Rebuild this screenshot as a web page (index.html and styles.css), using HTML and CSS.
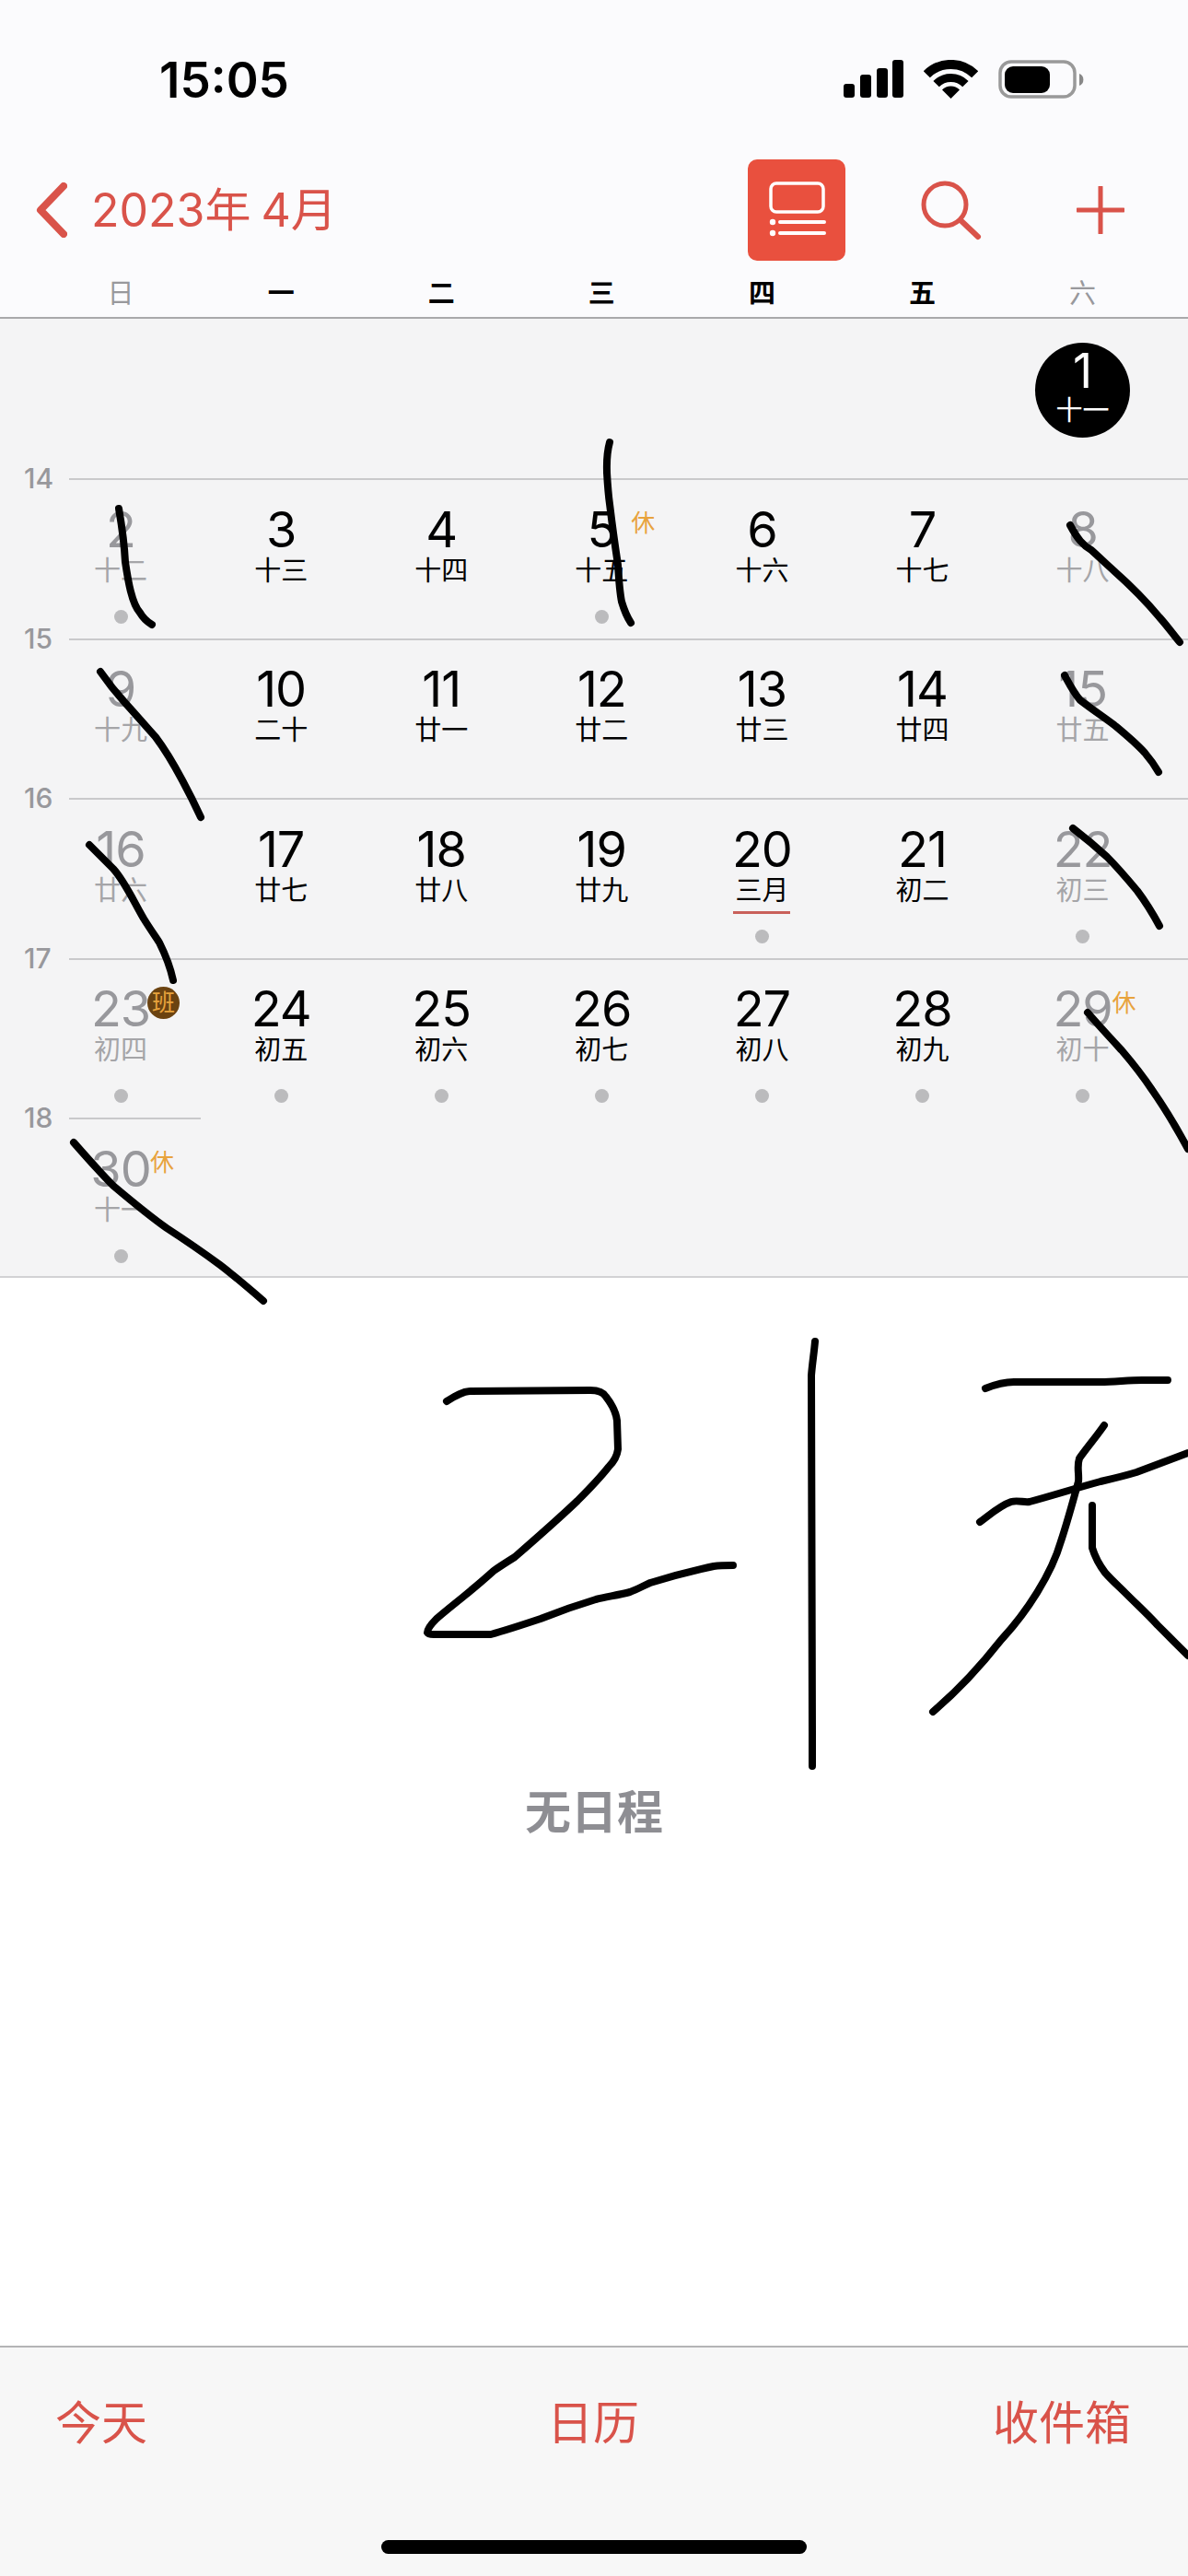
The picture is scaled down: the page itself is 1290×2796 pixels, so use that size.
FILE: index.html
```html
<!DOCTYPE html>
<html>
    <head>
        <meta charset="utf-8">
        <link rel="stylesheet" href="styles.css">
    </head>
    <body>
        <div id="header">
            <div id="status">
                <div id="time">15:05</div>
                <div id="statusIcons">
                    <svg width="65" height="42" viewBox="0 0 65 42"><rect x="0" y="26" width="12" height="15" rx="3"/><rect x="18" y="16" width="12" height="25" rx="3"/><rect x="36" y="9" width="12" height="32" rx="3"/><rect x="53" y="0" width="12" height="41" rx="3"/></svg>
                    <svg width="59" height="42" viewBox="0 0 59 42"><path d="M3.3 15.8A37 37 0 0 1 55.7 15.8" fill="none" stroke="#000" stroke-width="10"/><path d="M13.6 26.1A22.5 22.5 0 0 1 45.4 26.1" fill="none" stroke="#000" stroke-width="9"/><path d="M29.5 42L20 32.5A13.4 13.4 0 0 1 39 32.5Z"/></svg>
                    <svg width="93" height="42" viewBox="0 0 93 42"><rect x="2" y="2" width="81" height="38" rx="12" fill="none" stroke="#999" stroke-width="3.5"/><rect x="7" y="7" width="49" height="29" rx="9"/><path d="M88 15a7 7 0 0 1 0 13Z" fill="#888"/></svg>
                </div>
            </div>
            <div id="nav">
                <svg width="36" height="60" viewBox="0 0 36 60"><path d="M32 4L7 30L32 56" fill="none" stroke="#d9534a" stroke-width="8" stroke-linecap="round" stroke-linejoin="round"/></svg>
                <div id="title">2023年 4月</div>
                <div id="listBtn">
                    <svg width="106" height="110" viewBox="0 0 106 110"><rect x="25" y="26" width="57" height="31" rx="6" fill="none" stroke="#fff" stroke-width="3.5"/><circle cx="27" cy="68" r="3.2" fill="#fff"/><circle cx="27" cy="80" r="3.2" fill="#fff"/><path d="M35 68H83M35 80H83" stroke="#fff" stroke-width="4" stroke-linecap="round"/></svg>
                </div>
                <svg id="searchIcon" width="66" height="66" viewBox="0 0 66 66"><circle cx="26" cy="27" r="23" fill="none" stroke="#d9534a" stroke-width="5"/><path d="M43 44L62 62" stroke="#d9534a" stroke-width="6" stroke-linecap="round"/></svg>
                <svg id="plusIcon" width="52" height="52" viewBox="0 0 52 52"><path d="M26 1V51M1 26H51" stroke="#d9534a" stroke-width="5" stroke-linecap="round"/></svg>
            </div>
            <div id="weekdays">
                <div class="off">日</div>
                <div>一</div>
                <div>二</div>
                <div>三</div>
                <div>四</div>
                <div>五</div>
                <div class="off">六</div>
            </div>
        </div>

        <div id="month">
            <div class="days firstRow">
                <div class="day"></div><div class="day"></div><div class="day"></div><div class="day"></div><div class="day"></div><div class="day"></div>
                <div class="day">
                    <div class="selected"><span class="selNum">1</span><span class="selLunar">十一</span></div>
                </div>
            </div>

            <div class="rule"><span class="weekNum">14</span></div>
            <div class="days">
                <div class="day off"><div class="num">2</div><div class="lunar">十二</div><div class="dot"></div></div>
                <div class="day"><div class="num">3</div><div class="lunar">十三</div></div>
                <div class="day"><div class="num">4</div><div class="lunar">十四</div></div>
                <div class="day"><div class="num">5</div><div class="lunar">十五</div><div class="dot"></div><span class="rest">休</span></div>
                <div class="day"><div class="num">6</div><div class="lunar">十六</div></div>
                <div class="day"><div class="num">7</div><div class="lunar">十七</div></div>
                <div class="day off"><div class="num">8</div><div class="lunar">十八</div></div>
            </div>

            <div class="rule"><span class="weekNum">15</span></div>
            <div class="days">
                <div class="day off"><div class="num">9</div><div class="lunar">十九</div></div>
                <div class="day"><div class="num">10</div><div class="lunar">二十</div></div>
                <div class="day"><div class="num">11</div><div class="lunar">廿一</div></div>
                <div class="day"><div class="num">12</div><div class="lunar">廿二</div></div>
                <div class="day"><div class="num">13</div><div class="lunar">廿三</div></div>
                <div class="day"><div class="num">14</div><div class="lunar">廿四</div></div>
                <div class="day off"><div class="num">15</div><div class="lunar">廿五</div></div>
            </div>

            <div class="rule"><span class="weekNum">16</span></div>
            <div class="days">
                <div class="day off"><div class="num">16</div><div class="lunar">廿六</div></div>
                <div class="day"><div class="num">17</div><div class="lunar">廿七</div></div>
                <div class="day"><div class="num">18</div><div class="lunar">廿八</div></div>
                <div class="day"><div class="num">19</div><div class="lunar">廿九</div></div>
                <div class="day"><div class="num">20</div><div class="lunar monthStart">三月</div><div class="dot"></div></div>
                <div class="day"><div class="num">21</div><div class="lunar">初二</div></div>
                <div class="day off"><div class="num">22</div><div class="lunar">初三</div><div class="dot"></div></div>
            </div>

            <div class="rule"><span class="weekNum">17</span></div>
            <div class="days">
                <div class="day off"><div class="num">23</div><div class="lunar">初四</div><div class="dot"></div><span class="work">班</span></div>
                <div class="day"><div class="num">24</div><div class="lunar">初五</div><div class="dot"></div></div>
                <div class="day"><div class="num">25</div><div class="lunar">初六</div><div class="dot"></div></div>
                <div class="day"><div class="num">26</div><div class="lunar">初七</div><div class="dot"></div></div>
                <div class="day"><div class="num">27</div><div class="lunar">初八</div><div class="dot"></div></div>
                <div class="day"><div class="num">28</div><div class="lunar">初九</div><div class="dot"></div></div>
                <div class="day off"><div class="num">29</div><div class="lunar">初十</div><div class="dot"></div><span class="rest">休</span></div>
            </div>

            <div class="rule short"><span class="weekNum">18</span></div>
            <div class="days">
                <div class="day off"><div class="num">30</div><div class="lunar">十一</div><div class="dot"></div><span class="rest">休</span></div>
            </div>
        </div>

        <div id="agenda">
            <div id="empty">无日程</div>
        </div>

        <div id="footer">
            <div id="tabs">
                <div>今天</div>
                <div>日历</div>
                <div class="tabEnd">收件箱</div>
            </div>
            <div id="homeBar"></div>
        </div>

        <!-- pen marks drawn over the screenshot -->
        <svg id="ink" width="1290" height="2796" viewBox="0 0 1290 2796">
            <path d="M129 552C133 575 135 590 136 610C139 630 143 655 152 665C156 672 160 675 165 678"/>
            <path d="M662 480C658 495 659 505 659 513C660 530 661 540 662 547C666 580 669 600 671 613C672 630 673 643 675 653C678 663 681 670 685 676"/>
            <path d="M1162 570C1170 585 1176 592 1185 597C1195 606 1202 613 1210 620C1228 636 1244 652 1259 670C1268 680 1275 690 1281 697"/>
            <path d="M109 729C118 742 126 752 136 763C148 776 158 788 169 800C181 816 190 832 198 847C205 860 212 874 218 887"/>
            <path d="M1156 733C1162 744 1166 752 1173 760C1186 770 1198 778 1210 787C1222 797 1233 806 1243 817C1249 824 1254 831 1258 838"/>
            <path d="M97 917C108 928 116 936 123 943C135 956 145 978 156 997C164 1010 170 1018 173 1023C180 1037 185 1050 188 1064"/>
            <path d="M1165 899C1178 909 1190 919 1202 930C1214 942 1225 955 1235 967C1244 979 1252 992 1259 1005"/>
            <path d="M1181 1099C1193 1113 1206 1127 1218 1140C1230 1154 1241 1168 1251 1183C1265 1203 1278 1225 1290 1247"/>
            <path d="M80 1240C94 1256 108 1272 123 1287C142 1303 161 1319 181 1333C201 1346 220 1359 239 1373C256 1386 271 1399 286 1412"/>
            <path d="M485 1521C493 1516 502 1510 511 1510L641 1509C650 1509 655 1511 658 1516C665 1525 669 1533 670 1542L671 1573C670 1581 666 1587 661 1592C650 1606 638 1618 627 1629C605 1650 582 1670 559 1690C551 1695 543 1700 536 1705C525 1715 513 1725 502 1734C492 1742 482 1750 474 1757C470 1761 464 1767 464 1772C465 1774 468 1774 471 1774L533 1774C551 1769 569 1763 587 1757C607 1749 627 1742 647 1736C660 1733 672 1731 684 1728C692 1725 699 1721 706 1718C729 1711 752 1705 775 1700C782 1699 789 1699 796 1699"/>
            <path d="M885 1456C884 1468 882 1480 881 1493L882 1879C882 1892 882 1905 882 1917"/>
            <path d="M1070 1507C1080 1503 1090 1500 1101 1500L1195 1500C1210 1500 1225 1498 1240 1498L1268 1498"/>
            <path d="M1064 1652C1075 1644 1086 1634 1098 1630C1105 1628 1112 1631 1118 1630C1144 1623 1169 1615 1195 1608C1208 1605 1221 1602 1234 1598C1253 1591 1271 1584 1290 1577"/>
            <path d="M1199 1547C1190 1560 1178 1574 1172 1583C1169 1592 1172 1600 1171 1608C1165 1630 1158 1655 1152 1673C1142 1708 1115 1750 1087 1780C1065 1808 1040 1835 1013 1858"/>
            <path d="M1186 1634L1186 1680C1189 1690 1194 1699 1200 1707C1207 1715 1215 1722 1223 1730C1234 1741 1246 1752 1257 1764C1268 1775 1279 1786 1290 1797"/>
        </svg>
    </body>
</html>
```
FILE: styles.css
```css
:root {
    --red: #d9534a;
    --grey: #98989c;
    --cjk: Inter, "Noto Sans CJK SC", sans-serif;
}
* {
    box-sizing: border-box;
}
body {
    margin: 0;
    width: 1290px;
    height: 2796px;
    position: relative;
    overflow: hidden;
    background: white;
    font-family: var(--cjk);
    display: flex;
    flex-direction: column;
}
#header {
    height: 346px;
    background: #fbfbfd;
    border-bottom: 2px solid #a9a9ab;
}
#status {
    height: 173px;
    display: flex;
    align-items: center;
    justify-content: space-between;
    padding: 0 113px 0 173px;
}
#time {
    font-size: 53px;
    font-weight: 600;
    color: black;
}
#statusIcons {
    display: flex;
    gap: 22px;
    align-items: center;
    margin-bottom: 2px;
}
#nav {
    height: 110px;
    display: flex;
    align-items: center;
    padding: 0 69px 0 37px;
}
#title {
    font-size: 50px;
    color: var(--red);
    margin-left: 26px;
    padding-bottom: 8px;
    flex-grow: 1;
    word-spacing: -3px;
}
#listBtn {
    width: 106px;
    height: 110px;
    background: #e9503e;
    border-radius: 10px;
}
#searchIcon {
    margin-left: 82px;
}
#plusIcon {
    margin-left: 103px;
}
#weekdays {
    display: grid;
    grid-template-columns: repeat(7, 174.1px);
    padding: 16px 0 0 44px;
    font-size: 29px;
    line-height: 40px;
    font-weight: 700;
    text-align: center;
    color: black;
}
#weekdays .off {
    color: var(--grey);
    font-weight: 400;
}
#month {
    height: 1041px;
    background: #f4f4f5;
    border-bottom: 2px solid #d2d2d4;
    display: flex;
    flex-direction: column;
}
.rule {
    flex-shrink: 0;
    height: 2px;
    background: #c9c9cb;
    margin-left: 75px;
    position: relative;
}
.rule.short {
    width: 143px;
}
.weekNum {
    position: absolute;
    left: -49px;
    top: -20px;
    font-size: 30px;
    line-height: 40px;
    color: var(--grey);
    font-weight: 500;
}
.days {
    flex-shrink: 0;
    height: 171.6px;
    display: grid;
    grid-template-columns: repeat(7, 174.1px);
    padding-left: 44px;
}
.firstRow {
    height: 173px;
}
.day {
    position: relative;
    display: flex;
    flex-direction: column;
    align-items: center;
    padding-top: 26.5px;
    color: black;
}
.num {
    font-size: 54px;
    line-height: 54px;
    letter-spacing: -1px;
}
.lunar {
    position: relative;
    font-size: 29px;
    line-height: 32px;
    margin-top: 2px;
}
.day.off .num {
    color: var(--grey);
}
.day.off .lunar {
    color: #a5a5a8;
}
.monthStart::after {
    content: "";
    position: absolute;
    left: -2px;
    right: -2px;
    bottom: -9px;
    height: 3px;
    background: #c9605a;
}
.dot {
    width: 15px;
    height: 15px;
    border-radius: 50%;
    background: #bbbbbd;
    margin-top: 26px;
}
.rest {
    position: absolute;
    left: 119px;
    top: 32px;
    font-size: 26px;
    line-height: 30px;
    color: #e8a33d;
}
.work {
    position: absolute;
    left: 116px;
    top: 29px;
    width: 35px;
    height: 35px;
    border-radius: 50%;
    background: #6b4311;
    color: #e8a33d;
    font-size: 25px;
    line-height: 34px;
    text-align: center;
}
.selected {
    width: 103px;
    height: 103px;
    margin-top: -0.5px;
    border-radius: 50%;
    background: black;
    color: white;
    display: flex;
    flex-direction: column;
    align-items: center;
}
.selNum {
    font-size: 52px;
    line-height: 46px;
    margin-top: 8px;
}
.selLunar {
    font-size: 29px;
    line-height: 32px;
    margin-top: 4px;
}
#agenda {
    height: 1159px;
    display: flex;
    justify-content: center;
    padding-top: 544px;
}
#empty {
    font-size: 50px;
    line-height: 72px;
    font-weight: 700;
    color: #8e8e93;
}
#footer {
    flex-grow: 1;
    background: #f7f7f7;
    border-top: 2px solid #b4b4b6;
    padding-top: 52px;
}
#tabs {
    display: grid;
    grid-template-columns: 1fr auto 1fr;
    padding: 0 62px 0 60px;
    font-size: 50px;
    line-height: 60px;
    color: var(--red);
}
.tabEnd {
    justify-self: end;
}
#homeBar {
    width: 462px;
    height: 15px;
    border-radius: 8px;
    background: black;
    margin: 97px auto 0;
}
#ink {
    position: absolute;
    left: 0;
    top: 0;
}
#ink path {
    fill: none;
    stroke: black;
    stroke-width: 8;
    stroke-linecap: round;
    stroke-linejoin: round;
}
```
